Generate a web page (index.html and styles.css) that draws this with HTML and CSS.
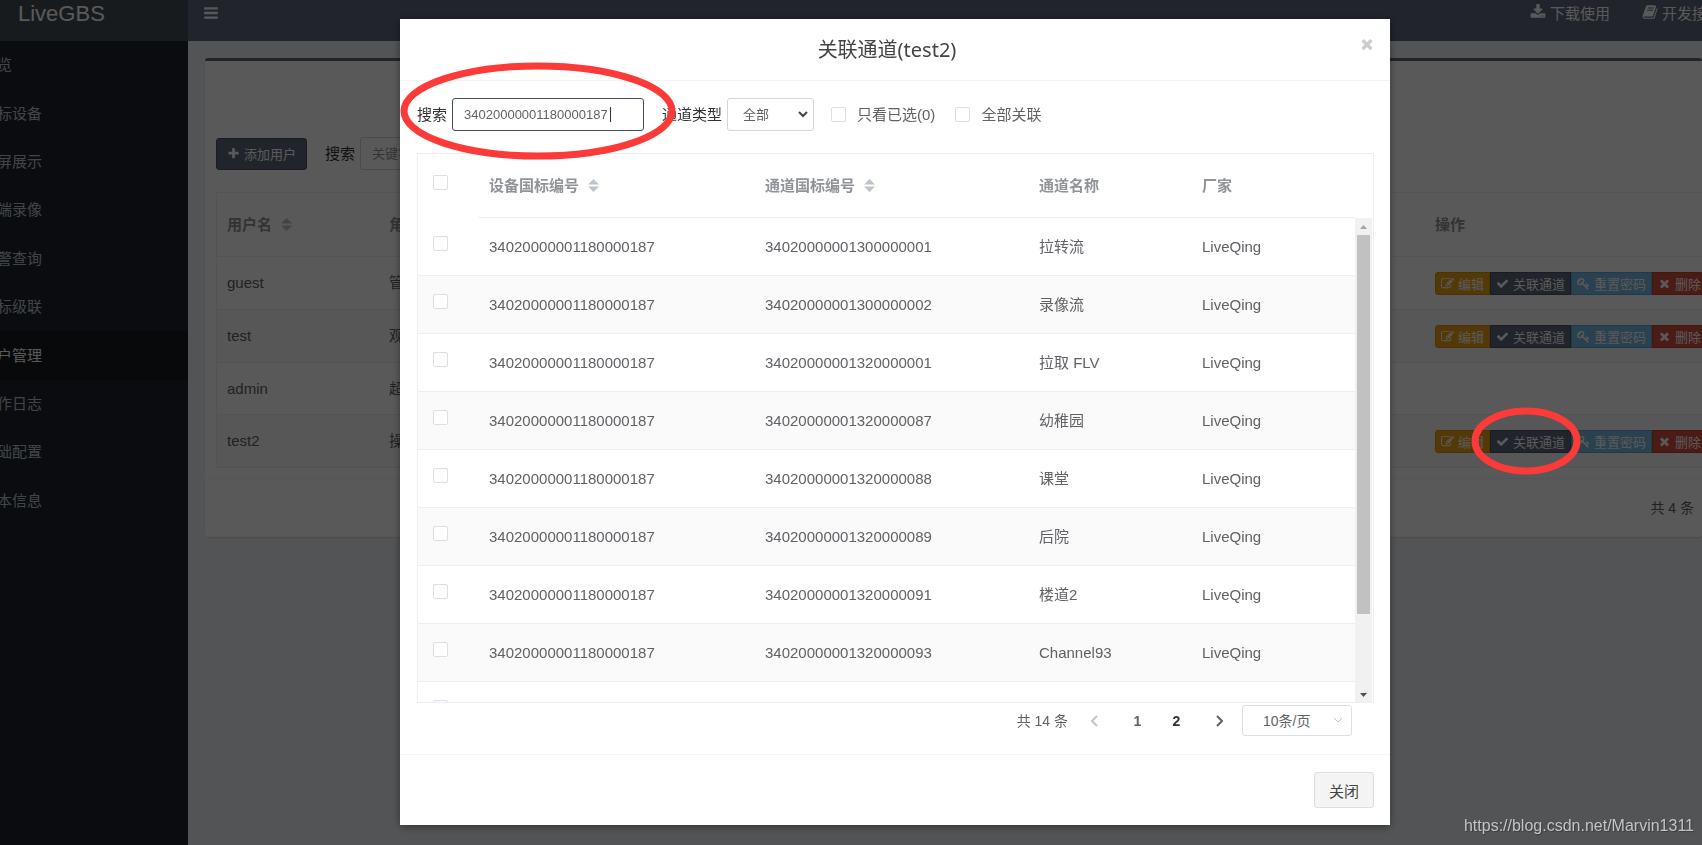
FILE: index.html
```html
<!DOCTYPE html>
<html lang="zh-CN">
<head>
<meta charset="utf-8">
<title>LiveGBS</title>
<link rel="stylesheet" href="styles.css">
</head>
<body>
<svg class="sprite" aria-hidden="true">
  <symbol id="i-edit" viewBox="0 0 1792 1792"><path d="M888 1184l116-116-152-152-116 116v56h96v96h56zm440-720q-16-16-33 1l-350 350q-17 17-1 33t33-1l350-350q17-17 1-33zm80 594v190q0 119-84.500 203.500t-203.500 84.500h-832q-119 0-203.500-84.500t-84.500-203.500v-832q0-119 84.500-203.500t203.500-84.500h832q63 0 117 25 15 7 18 23 3 17-9 29l-49 49q-14 14-32 8-23-6-45-6h-832q-66 0-113 47t-47 113v832q0 66 47 113t113 47h832q66 0 113-47t47-113v-126q0-13 9-22l64-64q15-15 35-7t20 29zm-96-738l288 288-672 672h-288v-288zm444 132l-92 92-288-288 92-92q28-28 68-28t68 28l152 152q28 28 28 68t-28 68z"/></symbol>
  <symbol id="i-check" viewBox="0 0 1792 1792"><path d="M1671 566q0 40-28 68l-724 724-136 136q-28 28-68 28t-68-28l-136-136-362-362q-28-28-28-68t28-68l136-136q28-28 68-28t68 28l294 295 656-657q28-28 68-28t68 28l136 136q28 28 28 68z"/></symbol>
  <symbol id="i-times" viewBox="0 0 1792 1792"><path d="M1490 1322q0 40-28 68l-136 136q-28 28-68 28t-68-28l-294-294-294 294q-28 28-68 28t-68-28l-136-136q-28-28-28-68t28-68l294-294-294-294q-28-28-28-68t28-68l136-136q28-28 68-28t68 28l294 294 294-294q28-28 68-28t68 28l136 136q28 28 28 68t-28 68l-294 294 294 294q28 28 28 68z"/></symbol>
  <symbol id="i-plus" viewBox="0 0 1792 1792"><path d="M1600 736v192q0 40-28 68t-68 28h-416v416q0 40-28 68t-68 28h-192q-40 0-68-28t-28-68v-416h-416q-40 0-68-28t-28-68v-192q0-40 28-68t68-28h416v-416q0-40 28-68t68-28h192q40 0 68 28t28 68v416h416q40 0 68 28t28 68z"/></symbol>
  <symbol id="i-bars" viewBox="0 0 1792 1792"><path d="M1664 1344v128q0 26-19 45t-45 19h-1408q-26 0-45-19t-19-45v-128q0-26 19-45t45-19h1408q26 0 45 19t19 45zm0-512v128q0 26-19 45t-45 19h-1408q-26 0-45-19t-19-45v-128q0-26 19-45t45-19h1408q26 0 45 19t19 45zm0-512v128q0 26-19 45t-45 19h-1408q-26 0-45-19t-19-45v-128q0-26 19-45t45-19h1408q26 0 45 19t19 45z"/></symbol>
  <symbol id="i-download" viewBox="0 0 1792 1792"><path d="M1344 1344q0-26-19-45t-45-19-45 19-19 45 19 45 45 19 45-19 19-45zm256 0q0-26-19-45t-45-19-45 19-19 45 19 45 45 19 45-19 19-45zm128-224v320q0 40-28 68t-68 28h-1472q-40 0-68-28t-28-68v-320q0-40 28-68t68-28h465l135 136q58 56 136 56t136-56l136-136h464q40 0 68 28t28 68zm-325-569q17 41-14 70l-448 448q-18 19-45 19t-45-19l-448-448q-31-29-14-70 17-39 59-39h256v-448q0-26 19-45t45-19h256q26 0 45 19t19 45v448h256q42 0 59 39z"/></symbol>
  <symbol id="i-book" viewBox="0 0 1792 1792"><path d="M1703 478q40 57 18 129l-275 906q-19 64-76.500 107.500t-122.500 43.500h-923q-77 0-148.500-53.500t-99.500-131.500q-24-67-2-127 0-4 3-27t4-37q1-8-3-21.500t-3-19.500q2-11 8-21t16.500-23.500 16.500-23.500q23-38 45-91.500t30-91.500q3-10 .5-30t-.5-28q3-11 17-28t17-23q21-36 42-92t25-90q1-9-2.500-32t.5-28q4-13 22-30.500t22-22.500q19-26 42.500-84.500t27.500-96.500q1-8-3-25.500t-2-26.500q2-8 9-18t18-23 17-21q8-12 16.500-30.500t15-35 16-36 19.500-32 26.500-23.500 36-11.500 47.500 5.500l-1 3q38-9 51-9h761q74 0 114 56t18 130l-274 906q-36 119-71.500 153.500t-128.500 34.500h-869q-27 0-38 15-11 16-1 43 24 70 144 70h923q29 0 56-15.500t35-41.500l300-987q7-22 5-57 38 15 59 43zm-1064 2q-4 13 2 22.500t20 9.500h608q13 0 25.500-9.500t16.500-22.500l21-64q4-13-2-22.500t-20-9.500h-608q-13 0-25.500 9.500t-16.500 22.500zm-83 256q-4 13 2 22.500t20 9.500h608q13 0 25.500-9.500t16.500-22.500l21-64q4-13-2-22.500t-20-9.500h-608q-13 0-25.500 9.500t-16.500 22.500z"/></symbol>
  <symbol id="i-key" viewBox="0 0 1792 1792"><path d="M832 512q0-80-56-136t-136-56-136 56-56 136q0 42 19 83-41-19-83-19-80 0-136 56t-56 136 56 136 136 56 136-56 56-136q0-42-19-83 41 19 83 19 80 0 136-56t56-136zm851 704q0 17-49 66t-66 49q-9 0-28.500-16t-36.500-33-38.500-40-24.500-26l-96 96 220 220q28 28 28 68 0 42-39 81t-81 39q-40 0-68-28l-671-671q-176 131-365 131-163 0-265.500-102.500t-102.500-265.500q0-160 95-313t248-248 313-95q163 0 265.500 102.500t102.500 265.500q0 189-131 365l355 355 96-96q-3-3-26-24.500t-40-38.500-33-36.500-16-28.500q0-17 49-66t66-49q13 0 23 10 6 6 46 44.500t82 79.500 86.500 86 73 78 28.500 41z"/></symbol>
  <symbol id="i-sort" viewBox="0 0 11 13"><path d="M5.500 0L11 5.500H0zM5.500 13L0 7.500h11z"/></symbol>
</svg>

<div class="app">
  <aside class="side">
    <a class="logo" href="#">LiveGBS</a>
    <nav class="menu">
      <a href="#">览</a>
      <a href="#">标设备</a>
      <a href="#">屏展示</a>
      <a href="#">端录像</a>
      <a href="#">警查询</a>
      <a href="#">标级联</a>
      <a class="active" href="#">户管理</a>
      <a href="#">作日志</a>
      <a href="#">础配置</a>
      <a href="#">本信息</a>
    </nav>
  </aside>
  <div class="main">
    <header class="navbar">
      <button class="toggle" type="button" aria-label="菜单"><svg class="ico"><use href="#i-bars"/></svg></button>
      <nav class="links">
        <a href="#"><svg class="ico"><use href="#i-download"/></svg>下载使用</a>
        <a href="#"><svg class="ico"><use href="#i-book"/></svg>开发接口</a>
      </nav>
    </header>
    <section class="box">
      <form class="box-tools">
        <button class="add" type="button"><svg class="ico-s"><use href="#i-plus"/></svg>添加用户</button>
        <label for="kw">搜索</label>
        <input id="kw" class="field" type="text" placeholder="关键字">
      </form>
      <table class="users">
        <colgroup><col class="u-name"><col class="u-role"><col></colgroup>
        <thead>
          <tr><th>用户名<svg class="sort"><use href="#i-sort"/></svg></th><th>角色</th><th>操作</th></tr>
        </thead>
        <tbody>
          <tr><td>guest</td><td>管理员</td><td><div class="ops"><button class="op edit" type="button"><svg class="ico-s"><use href="#i-edit"/></svg>编辑</button><button class="op link" type="button"><svg class="ico-s"><use href="#i-check"/></svg>关联通道</button><button class="op reset" type="button"><svg class="ico-s"><use href="#i-key"/></svg>重置密码</button><button class="op del" type="button"><svg class="ico-s"><use href="#i-times"/></svg>删除</button></div></td></tr>
          <tr><td>test</td><td>观众</td><td><div class="ops"><button class="op edit" type="button"><svg class="ico-s"><use href="#i-edit"/></svg>编辑</button><button class="op link" type="button"><svg class="ico-s"><use href="#i-check"/></svg>关联通道</button><button class="op reset" type="button"><svg class="ico-s"><use href="#i-key"/></svg>重置密码</button><button class="op del" type="button"><svg class="ico-s"><use href="#i-times"/></svg>删除</button></div></td></tr>
          <tr><td>admin</td><td>超级管理员</td><td></td></tr>
          <tr><td>test2</td><td>操作员</td><td><div class="ops"><button class="op edit" type="button"><svg class="ico-s"><use href="#i-edit"/></svg>编辑</button><button class="op link" type="button"><svg class="ico-s"><use href="#i-check"/></svg>关联通道</button><button class="op reset" type="button"><svg class="ico-s"><use href="#i-key"/></svg>重置密码</button><button class="op del" type="button"><svg class="ico-s"><use href="#i-times"/></svg>删除</button></div></td></tr>
        </tbody>
      </table>
      <div class="box-foot">共 4 条</div>
    </section>
  </div>
</div>

<div class="backdrop">
  <div class="modal" role="dialog" aria-labelledby="title">
    <header class="modal-head">
      <h4 id="title">关联通道(test2)</h4>
      <button class="close" type="button" aria-label="关闭"><svg class="ico"><use href="#i-times"/></svg></button>
    </header>
    <div class="modal-body">
      <form class="filters">
        <label for="q">搜索</label>
        <span class="query"><input id="q" class="field focus" type="text" value="34020000001180000187"><i class="caret"></i></span>
        <label for="type">通道类型</label>
        <span class="pick"><select id="type" class="field"><option>全部</option></select><svg class="arrow" viewBox="0 0 10 7"><path d="M1 1l4 4 4-4"/></svg></span>
        <label class="check"><input type="checkbox">只看已选(0)</label>
        <label class="check"><input type="checkbox">全部关联</label>
      </form>
      <div class="grid">
        <div class="rows">
          <table class="channels">
            <colgroup><col class="c-check"><col class="c-dev"><col class="c-chan"><col class="c-name"><col></colgroup>
            <thead>
              <tr><th><input type="checkbox" aria-label="全选"></th><th>设备国标编号<svg class="sort"><use href="#i-sort"/></svg></th><th>通道国标编号<svg class="sort"><use href="#i-sort"/></svg></th><th>通道名称</th><th>厂家</th></tr>
            </thead>
            <tbody>
              <tr><td><input type="checkbox" aria-label="选择"></td><td>34020000001180000187</td><td>34020000001300000001</td><td>拉转流</td><td>LiveQing</td></tr>
              <tr><td><input type="checkbox" aria-label="选择"></td><td>34020000001180000187</td><td>34020000001300000002</td><td>录像流</td><td>LiveQing</td></tr>
              <tr><td><input type="checkbox" aria-label="选择"></td><td>34020000001180000187</td><td>34020000001320000001</td><td>拉取 FLV</td><td>LiveQing</td></tr>
              <tr><td><input type="checkbox" aria-label="选择"></td><td>34020000001180000187</td><td>34020000001320000087</td><td>幼稚园</td><td>LiveQing</td></tr>
              <tr><td><input type="checkbox" aria-label="选择"></td><td>34020000001180000187</td><td>34020000001320000088</td><td>课堂</td><td>LiveQing</td></tr>
              <tr><td><input type="checkbox" aria-label="选择"></td><td>34020000001180000187</td><td>34020000001320000089</td><td>后院</td><td>LiveQing</td></tr>
              <tr><td><input type="checkbox" aria-label="选择"></td><td>34020000001180000187</td><td>34020000001320000091</td><td>楼道2</td><td>LiveQing</td></tr>
              <tr><td><input type="checkbox" aria-label="选择"></td><td>34020000001180000187</td><td>34020000001320000093</td><td>Channel93</td><td>LiveQing</td></tr>
              <tr><td><input type="checkbox" aria-label="选择"></td><td></td><td></td><td></td><td></td></tr>
            </tbody>
          </table>
        </div>
        <div class="scroll">
          <svg viewBox="0 0 7 4"><path d="M0 4L3.500 0 7 4z" fill="#a3a3a3"/></svg>
          <div class="thumb"></div>
          <svg viewBox="0 0 7 4"><path d="M0 0h7L3.500 4z" fill="#505050"/></svg>
        </div>
      </div>
      <div class="pager">
        <span class="total">共 14 条</span>
        <button type="button" class="off" aria-label="上一页"><svg viewBox="0 0 8 12"><path d="M6 1L1 6l5 5"/></svg></button>
        <button type="button">1</button>
        <button type="button" class="on">2</button>
        <button type="button" class="next" aria-label="下一页"><svg viewBox="0 0 8 12"><path d="M2 1l5 5-5 5"/></svg></button>
        <span class="pick size"><select class="field" aria-label="每页条数"><option>10条/页</option></select><svg class="arrow" viewBox="0 0 10 6"><path d="M1 1l4 4 4-4"/></svg></span>
      </div>
    </div>
    <footer class="modal-foot"><button class="shut" type="button">关闭</button></footer>
  </div>
</div>

<svg class="marks" aria-hidden="true">
  <ellipse cx="538" cy="111" rx="134" ry="45"/>
  <ellipse cx="1526" cy="441" rx="51" ry="30"/>
</svg>
<div class="watermark">https://blog.csdn.net/Marvin1311</div>
</body>
</html>
```
FILE: styles.css
```css
* { box-sizing: border-box; }

body {
  margin: 0;
  height: 100vh;
  overflow: hidden;
  background: #ecf0f5;
  color: #333;
  font: 15px/20px "Liberation Sans", "Noto Sans CJK SC", sans-serif;
}

button, input, select { font-family: inherit; margin: 0; }
button { cursor: pointer; }
a { color: inherit; text-decoration: none; }
svg { flex: none; }
.sprite { position: absolute; width: 0; height: 0; }
.ico { width: 16px; height: 16px; fill: currentColor; }
.ico-s { width: 13px; height: 13px; fill: currentColor; }
.sort { width: 11px; height: 13px; margin-left: 9px; vertical-align: -1px; fill: #c0c4cc; }

/* Page frame */
.app { display: flex; height: 100vh; }
.side { flex: none; width: 188px; background: #20242b; overflow: hidden; }
.logo {
  display: block;
  height: 41px;
  padding-left: 18px;
  background: #454d55;
  color: #fff;
  font-size: 22px;
  line-height: 27px;
}
.menu { display: grid; grid-auto-rows: 1fr; height: 484px; margin-left: -3px; color: #b8c7ce; }
.menu a { display: flex; align-items: center; }
.menu .active { background: #191c20; color: #fff; }

.main { flex: 1; min-width: 0; }
.navbar {
  display: flex;
  justify-content: space-between;
  height: 41px;
  padding: 4px 0 0 15px;
  background: #5e677c;
  color: #fff;
  overflow: hidden;
}
.toggle { display: flex; height: 20px; padding: 1px 0; border: 0; background: none; color: inherit; }
.links { display: flex; gap: 32px; margin-right: -20px; }
.links a { display: flex; gap: 4px; height: 20px; white-space: nowrap; }

.box {
  margin: 17px 0 0 17px;
  border-top: 3px solid #5e677c;
  border-radius: 3px;
  background: #fff;
  box-shadow: 0 1px 1px rgba(0, 0, 0, .1);
}
.box-tools { display: flex; align-items: center; padding: 76px 11px 22px; }
.box-tools label { margin: 0 5px 0 18px; }
.add {
  display: flex;
  align-items: center;
  gap: 4px;
  height: 32px;
  padding: 0 10px;
  border: 1px solid #4a5264;
  border-radius: 3px;
  background: #5e677c;
  color: #fff;
  font-size: 13px;
}
.field {
  width: 192px;
  height: 33px;
  padding: 0 11px;
  border: 1px solid #d2d6de;
  border-radius: 3px;
  background: #fff;
  color: #606266;
  font-size: 13px;
  outline: 0;
}
.field.focus { border-color: #454c5e; }
.field::placeholder { color: #999; }

table { width: 100%; border-collapse: separate; border-spacing: 0; table-layout: fixed; color: #606266; }
th, td { padding: 0 11px; text-align: left; border-bottom: 1px solid #ebeef5; white-space: nowrap; }
th { color: #909399; }
.users { width: calc(100% - 11px); margin-left: 11px; border: 1px solid #ebeef5; border-right: 0; }
.u-name { width: 162px; }
.u-role { width: 1046px; }
.users th, .users td { padding: 0 0 0 10px; }
.users th { height: 64px; }
.users td { height: 53px; overflow: hidden; }
.users tbody tr:nth-child(n+3) td { height: 52px; }
.users tbody tr:nth-child(even) { background: #fafafa; }
.users tbody tr:last-child td { border-bottom: 0; }
.box-foot { margin-top: 10px; padding: 19px 8px; border-top: 1px solid #f4f4f4; text-align: right; font-size: 14px; color: #606266; }

.ops { display: flex; }
.op {
  display: flex;
  flex: none;
  align-items: center;
  gap: 4px;
  height: 23px;
  padding: 0 5px;
  border: 1px solid;
  color: #fff;
  font-size: 13px;
}
.edit { background: #f0a418; border-color: #d8900c; border-radius: 3px 0 0 3px; }
.link { background: #5e677c; border-color: #4a5264; }
.reset { background: #78bce6; border-color: #5aa8d8; }
.del { background: #d85040; border-color: #c04030; }

/* Dialog */
.backdrop {
  position: fixed;
  inset: 0;
  display: flex;
  justify-content: center;
  align-items: flex-start;
  padding: 19px 0 0 88px;
  background: rgba(0, 0, 0, .65);
}
.modal { width: 990px; max-width: 100%; background: #fff; box-shadow: 0 2px 8px rgba(0, 0, 0, .4); }
.modal-head { display: flex; align-items: flex-start; padding: 17px 15px 16px; border-bottom: 1px solid #f4f4f4; }
.modal-head h4 {
  flex: 1;
  margin: 0;
  color: #444;
  font: 400 20px/28px "Noto Sans", "Noto Sans CJK SC", sans-serif;
  text-align: center;
}
.close { display: flex; padding: 0; border: 0; background: none; color: #ccc; }
.modal-body { padding: 17px 16px 18px 17px; }

.filters { display: flex; align-items: center; margin-bottom: 22px; }
.filters > label { margin-right: 5px; }
.query { position: relative; margin-right: 18px; }
.query .field, .pick .field { display: block; }
.caret { position: absolute; left: 158px; top: 9px; width: 1px; height: 15px; background: #333; }
.pick { position: relative; }
.pick .field { width: 87px; padding: 0 15px; appearance: none; }
.pick .arrow { position: absolute; right: 6px; top: 13px; width: 10px; height: 7px; fill: none; stroke: #444; stroke-width: 2; }
.filters .check { display: flex; align-items: center; gap: 11px; margin: 0 0 0 17px; color: #606266; }
.filters .check + .check { margin-left: 20px; }

input[type="checkbox"] {
  display: block;
  width: 15px;
  height: 15px;
  border: 1px solid #dcdfe6;
  border-radius: 2px;
  background: #fff;
  appearance: none;
}

.grid { display: grid; grid-template-columns: 1fr 17px; padding-right: 1px; border: 1px solid #ebeef5; }
.rows { max-height: 548px; overflow: hidden; }
.c-check { width: 60px; }
.c-dev { width: 276px; }
.c-chan { width: 274px; }
.c-name { width: 163px; }
.channels th { height: 64px; }
.channels td { height: 58px; }
.channels th:first-child { padding: 21px 15px 0; border-bottom-color: #fff; vertical-align: top; }
.channels td:first-child { padding: 18px 15px 0; vertical-align: top; }
.channels tbody tr:nth-child(even) { background: #fafafa; }
.scroll {
  display: flex;
  flex-direction: column;
  align-items: center;
  margin-top: 64px;
  padding: 7px 0 5px;
  background: #f1f1f1;
}
.scroll svg { width: 7px; height: 4px; }
.thumb { width: 13px; height: 379px; margin: 6px 0 auto; background: #c1c1c1; }

.pager { display: flex; justify-content: flex-end; align-items: center; margin-top: 2px; padding-right: 22px; color: #606266; font-size: 14px; }
.pager button {
  display: flex;
  justify-content: center;
  width: 39px;
  padding: 0;
  border: 0;
  background: none;
  color: #606266;
  font-size: 14px;
  font-weight: 700;
}
.pager .total { margin-right: 11px; }
.pager button svg { width: 8px; height: 12px; margin-right: 8px; fill: none; stroke: #606266; stroke-width: 2; }
.pager button.off svg { stroke: #c0c4cc; }
.pager .on { color: #303133; }
.pager .next { margin-left: 7px; }
.size .field { width: 110px; height: 31px; padding: 0 20px; border-color: #dcdfe6; font-size: 14px; }
.size .arrow { right: 9px; top: 12px; height: 6px; stroke: #c0c4cc; stroke-width: 1; }

.modal-foot { display: flex; justify-content: flex-end; padding: 17px 16px; border-top: 1px solid #f4f4f4; }
.shut { height: 36px; padding: 0 14px; border: 1px solid #ddd; border-radius: 3px; background: #f4f4f4; color: #444; font-size: 15px; }

/* Annotations */
.marks { position: fixed; inset: 0; width: 100%; height: 100%; fill: none; stroke: #fc3a38; stroke-width: 7; pointer-events: none; }
.watermark { position: fixed; right: 8px; bottom: 9px; color: #c4c4c4; font-size: 16px; text-shadow: 1px 1px 1px rgba(0, 0, 0, .3); }
```
